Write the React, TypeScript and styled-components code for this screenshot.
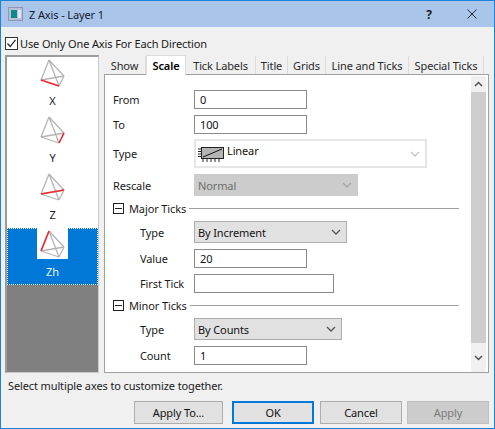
import React from "react";
import styled, { createGlobalStyle } from "styled-components";

const Global = createGlobalStyle`
  html, body { margin: 0; padding: 0; background: #f0f0f0; }
  #root { width: 495px; height: 429px; }
  * { box-sizing: border-box; }
`;

const Window = styled.div`
  width: 495px;
  height: 429px;
  display: flex;
  flex-direction: column;
  background: #f0f0f0;
  border: 1px solid #1a82d8;
  font-family: "Noto Sans", sans-serif;
  font-size: 11px;
  letter-spacing: -0.12px;
  color: #1a1a1a;
  overflow: hidden;
`;

const TitleBar = styled.div`
  height: 26px;
  flex: none;
  display: flex;
  align-items: center;
  background: #a9c5e9;
  padding-left: 7px;
  color: #10202f;
`;

const TitleText = styled.span`
  margin-left: 6px;
  flex: 1;
`;

const HelpMark = styled.span`
  width: 16px;
  text-align: center;
  font-weight: 700;
  font-size: 12px;
  color: #222;
  margin-right: 30px;
`;

const CloseMark = styled.svg`
  width: 10px;
  height: 10px;
  margin-right: 17px;
`;

const CheckRow = styled.label`
  display: flex;
  align-items: center;
  height: 13px;
  margin: 10px 0 0 4px;
`;

const CheckBox = styled.span`
  width: 13px;
  height: 13px;
  border: 1px solid #333;
  background: #fff;
  display: flex;
  align-items: center;
  justify-content: center;
  margin-right: 2px;
`;

const Main = styled.div`
  display: flex;
  height: 318px;
  margin: 5px 0 0 4px;
`;

const AxisList = styled.div`
  width: 94px;
  flex: none;
  display: flex;
  flex-direction: column;
  background: #fff;
  border-style: solid;
  border-color: #9b9b9b #c9c9c9 #c9c9c9 #9b9b9b;
  border-width: 2px 1px 1px 2px;
`;

const AxisItem = styled.div<{ $selected?: boolean }>`
  height: 57px;
  flex: none;
  display: flex;
  flex-direction: column;
  align-items: center;
  background: ${(p) => (p.$selected ? "#0078d7" : "#fff")};
  color: ${(p) => (p.$selected ? "#e8f3fc" : "#1a1a1a")};
  outline: ${(p) => (p.$selected ? "1px dotted #ffffff" : "none")};
  outline-offset: -1px;
`;

const AxisIcon = styled.svg`
  width: 31px;
  height: 31px;
  flex: none;
  background: #fff;
`;

const AxisName = styled.span`
  margin-top: 5px;
  line-height: 16px;
`;

const ListFill = styled.div`
  flex: 1;
  background: #808080;
`;

const RightPane = styled.div`
  width: 385px;
  margin-left: 5px;
  display: flex;
  flex-direction: column;
`;

const TabStrip = styled.div`
  display: flex;
  align-items: flex-end;
  height: 19px;
  flex: none;
  position: relative;
  z-index: 1;
`;

const Tab = styled.div<{ $w: number; $active?: boolean }>`
  width: ${(p) => p.$w}px;
  height: ${(p) => (p.$active ? 20 : 18)}px;
  margin-bottom: ${(p) => (p.$active ? -1 : 0)}px;
  display: flex;
  align-items: center;
  justify-content: center;
  flex: none;
  background: ${(p) => (p.$active ? "#fff" : "#f0f0f0")};
  font-weight: ${(p) => (p.$active ? 600 : 400)};
  color: ${(p) => (p.$active ? "#000" : "#2a2a2a")};
  border-style: solid;
  border-color: #dcdcdc;
  border-width: ${(p) => (p.$active ? "1px 1px 0 1px" : "0 1px 0 0")};
`;

const Panel = styled.div`
  height: 299px;
  flex: none;
  display: flex;
  background: #fff;
  border: 1px solid #a0a0a0;
`;

const Form = styled.div`
  flex: 1;
  padding-left: 8px;
  min-width: 0;
`;

const Row = styled.div<{ $mt: number; $h: number; $indent?: boolean }>`
  display: flex;
  align-items: center;
  margin-top: ${(p) => p.$mt}px;
  height: ${(p) => p.$h}px;
  padding-left: ${(p) => (p.$indent ? 27 : 0)}px;
`;

const Label = styled.span<{ $indent?: boolean }>`
  width: ${(p) => (p.$indent ? 54 : 81)}px;
  flex: none;
`;

const Input = styled.div<{ $w: number }>`
  width: ${(p) => p.$w}px;
  height: 100%;
  background: #fff;
  border: 1px solid #8a8a8a;
  padding-left: 5px;
  display: flex;
  align-items: center;
  color: #111;
`;

const Combo = styled.div<{ $w: number }>`
  width: ${(p) => p.$w}px;
  height: 100%;
  background: #e1e1e1;
  border: 1px solid #adadad;
  padding: 0 5px 0 3px;
  display: flex;
  align-items: center;
  justify-content: space-between;
  color: #111;
`;

const DisabledCombo = styled(Combo)`
  background: #cccccc;
  border-color: #cccccc;
  color: #6d6d6d;
`;

const BigCombo = styled.div`
  width: 233px;
  height: 100%;
  background: #fff;
  border: 2px solid #e6e6e6;
  padding: 0 5px 0 1px;
  display: flex;
  align-items: center;
`;

const Linear = styled.span`
  margin: 0 0 7px 3px;
  flex: 1;
  color: #111;
`;

const Chevron = styled.svg`
  width: 10px;
  height: 6px;
  flex: none;
`;

const GroupHead = styled.div<{ $mt: number }>`
  display: flex;
  align-items: center;
  height: 13px;
  width: 346px;
  margin-top: ${(p) => p.$mt}px;
`;

const Minus = styled.span`
  width: 11px;
  height: 11px;
  border: 1px solid #222;
  display: flex;
  align-items: center;
  justify-content: center;
  flex: none;
  margin-right: 5px;
  &::after {
    content: "";
    width: 7px;
    height: 1px;
    background: #222;
  }
`;

const GroupRule = styled.span`
  height: 1px;
  background: #a0a0a0;
  margin-left: 3px;
  margin-top: -1px;
  flex: 1;
`;

const ScrollBar = styled.div`
  width: 15px;
  margin: 1px 2px 0 0;
  flex: none;
  display: flex;
  flex-direction: column;
  background: #f0f0f0;
`;

const ScrollArrow = styled.div<{ $h: number }>`
  height: ${(p) => p.$h}px;
  flex: none;
  display: flex;
  align-items: center;
  justify-content: center;
`;

const ScrollThumb = styled.div`
  flex: 1;
  background: #cdcdcd;
`;

const Status = styled.div`
  height: 16px;
  margin: 5px 0 0 7px;
  line-height: 16px;
  color: #222;
`;

const Buttons = styled.div`
  display: flex;
  height: 23px;
  margin: 7px 0 0 133px;
`;

const Button = styled.div<{ $w: number; $ml?: number; $primary?: boolean; $disabled?: boolean }>`
  width: ${(p) => p.$w}px;
  margin-left: ${(p) => p.$ml ?? 0}px;
  display: flex;
  align-items: center;
  justify-content: center;
  flex: none;
  background: ${(p) => (p.$disabled ? "#cccccc" : "#e1e1e1")};
  border: ${(p) => (p.$primary ? "2px solid #0078d7" : `1px solid ${p.$disabled ? "#bfbfbf" : "#adadad"}`)};
  color: ${(p) => (p.$disabled ? "#7a7a7a" : "#111")};
`;

type Edge = "apexLeft" | "rightBottom" | "leftRight" | "leftBottom";

const P = { apex: [12, 3], left: [4, 23], right: [27, 19], bottom: [22, 29] } as const;
type Pt = keyof typeof P;
const edges: Record<Edge, [Pt, Pt]> = {
  apexLeft: ["apex", "left"],
  rightBottom: ["right", "bottom"],
  leftRight: ["left", "right"],
  leftBottom: ["left", "bottom"],
};
const allEdges: [Pt, Pt][] = [
  ["apex", "left"],
  ["apex", "right"],
  ["apex", "bottom"],
  ["left", "bottom"],
  ["left", "right"],
  ["right", "bottom"],
];

const Tetra = ({ red }: { red: Edge }) => {
  const r = edges[red];
  return (
    <AxisIcon viewBox="0 0 31 31">
      {allEdges.map(([a, b], i) => (
        <line key={i} x1={P[a][0]} y1={P[a][1]} x2={P[b][0]} y2={P[b][1]} stroke="#b4b4b4" strokeWidth="1.3" />
      ))}
      <line x1={P[r[0]][0]} y1={P[r[0]][1]} x2={P[r[1]][0]} y2={P[r[1]][1]} stroke="#f5282f" strokeWidth="1.6" />
    </AxisIcon>
  );
};

const Down = ({ color }: { color: string }) => (
  <Chevron viewBox="0 0 10 6">
    <path d="M1 1 L5 5 L9 1" fill="none" stroke={color} strokeWidth="1.3" />
  </Chevron>
);

const ScaleGlyph = () => (
  <svg width="27" height="19" viewBox="0 0 27 19" style={{ flex: "none" }}>
    <rect x="4.5" y="3.5" width="22" height="11" fill="#b4b4b4" stroke="#222" />
    <path d="M6 13 L25 5" stroke="#111" strokeWidth="1" />
    <path d="M1 5h3M1 7.5h3M1 10h3M1 12.5h3M6 15v3M10 15v3M14 15v3M18 15v3M22 15v3" stroke="#222" strokeWidth="1" />
  </svg>
);

const WindowIcon = () => (
  <svg width="15" height="14" viewBox="0 0 15 14" style={{ flex: "none" }}>
    <rect x="0.5" y="0.5" width="14" height="13" fill="#b8bfd8" stroke="#8f93b5" />
    <rect x="3" y="3" width="6" height="8" fill="#0d8a86" />
    <rect x="10" y="3" width="3" height="8" fill="#dfe6f5" />
  </svg>
);

const tabs: [string, number][] = [
  ["Show", 42],
  ["Scale", 40],
  ["Tick Labels", 70],
  ["Title", 32],
  ["Grids", 38],
  ["Line and Ticks", 83],
  ["Special Ticks", 75],
];

export default function App() {
  return (
    <>
      <Global />
      <Window>
        <TitleBar>
          <WindowIcon />
          <TitleText>Z Axis - Layer 1</TitleText>
          <HelpMark>?</HelpMark>
          <CloseMark viewBox="0 0 10 10">
            <path d="M0.5 0.5 L9.5 9.5 M9.5 0.5 L0.5 9.5" stroke="#1c2b33" strokeWidth="1" />
          </CloseMark>
        </TitleBar>
        <CheckRow>
          <CheckBox>
            <svg width="11" height="11" viewBox="0 0 11 11">
              <path d="M1.5 5.5 L4.2 8.5 L9.5 1.8" fill="none" stroke="#222" strokeWidth="1.2" />
            </svg>
          </CheckBox>
          Use Only One Axis For Each Direction
        </CheckRow>
        <Main>
          <AxisList>
            <AxisItem>
              <Tetra red="leftBottom" />
              <AxisName>X</AxisName>
            </AxisItem>
            <AxisItem>
              <Tetra red="rightBottom" />
              <AxisName>Y</AxisName>
            </AxisItem>
            <AxisItem>
              <Tetra red="leftRight" />
              <AxisName>Z</AxisName>
            </AxisItem>
            <AxisItem $selected>
              <Tetra red="apexLeft" />
              <AxisName>Zh</AxisName>
            </AxisItem>
            <ListFill />
          </AxisList>
          <RightPane>
            <TabStrip>
              {tabs.map(([t, w]) => (
                <Tab key={t} $w={w} $active={t === "Scale"}>
                  {t}
                </Tab>
              ))}
            </TabStrip>
            <Panel>
              <Form>
                <Row $mt={15} $h={19}>
                  <Label>From</Label>
                  <Input $w={113}>0</Input>
                </Row>
                <Row $mt={6} $h={19}>
                  <Label>To</Label>
                  <Input $w={113}>100</Input>
                </Row>
                <Row $mt={5} $h={29}>
                  <Label>Type</Label>
                  <BigCombo>
                    <ScaleGlyph />
                    <Linear>Linear</Linear>
                    <Down color="#c4c4c4" />
                  </BigCombo>
                </Row>
                <Row $mt={6} $h={22}>
                  <Label>Rescale</Label>
                  <DisabledCombo $w={164}>
                    Normal
                    <Down color="#a8a8a8" />
                  </DisabledCombo>
                </Row>
                <GroupHead $mt={6}>
                  <Minus />
                  Major Ticks
                  <GroupRule />
                </GroupHead>
                <Row $mt={6} $h={22} $indent>
                  <Label $indent>Type</Label>
                  <Combo $w={153}>
                    By Increment
                    <Down color="#555" />
                  </Combo>
                </Row>
                <Row $mt={6} $h={19} $indent>
                  <Label $indent>Value</Label>
                  <Input $w={113}>20</Input>
                </Row>
                <Row $mt={6} $h={19} $indent>
                  <Label $indent>First Tick</Label>
                  <Input $w={140} />
                </Row>
                <GroupHead $mt={6}>
                  <Minus />
                  Minor Ticks
                  <GroupRule />
                </GroupHead>
                <Row $mt={6} $h={22} $indent>
                  <Label $indent>Type</Label>
                  <Combo $w={148}>
                    By Counts
                    <Down color="#555" />
                  </Combo>
                </Row>
                <Row $mt={6} $h={19} $indent>
                  <Label $indent>Count</Label>
                  <Input $w={113}>1</Input>
                </Row>
              </Form>
              <ScrollBar>
                <ScrollArrow $h={16}>
                  <svg width="9" height="6" viewBox="0 0 9 6">
                    <path d="M1 5 L4.5 1.5 L8 5" fill="none" stroke="#505050" strokeWidth="1.5" />
                  </svg>
                </ScrollArrow>
                <ScrollThumb />
                <ScrollArrow $h={29}>
                  <svg width="9" height="6" viewBox="0 0 9 6">
                    <path d="M1 1 L4.5 4.5 L8 1" fill="none" stroke="#505050" strokeWidth="1.5" />
                  </svg>
                </ScrollArrow>
              </ScrollBar>
            </Panel>
          </RightPane>
        </Main>
        <Status>Select multiple axes to customize together.</Status>
        <Buttons>
          <Button $w={89}>Apply To...</Button>
          <Button $w={82} $ml={9} $primary>OK</Button>
          <Button $w={82} $ml={6}>Cancel</Button>
          <Button $w={82} $ml={5} $disabled>Apply</Button>
        </Buttons>
      </Window>
    </>
  );
}
